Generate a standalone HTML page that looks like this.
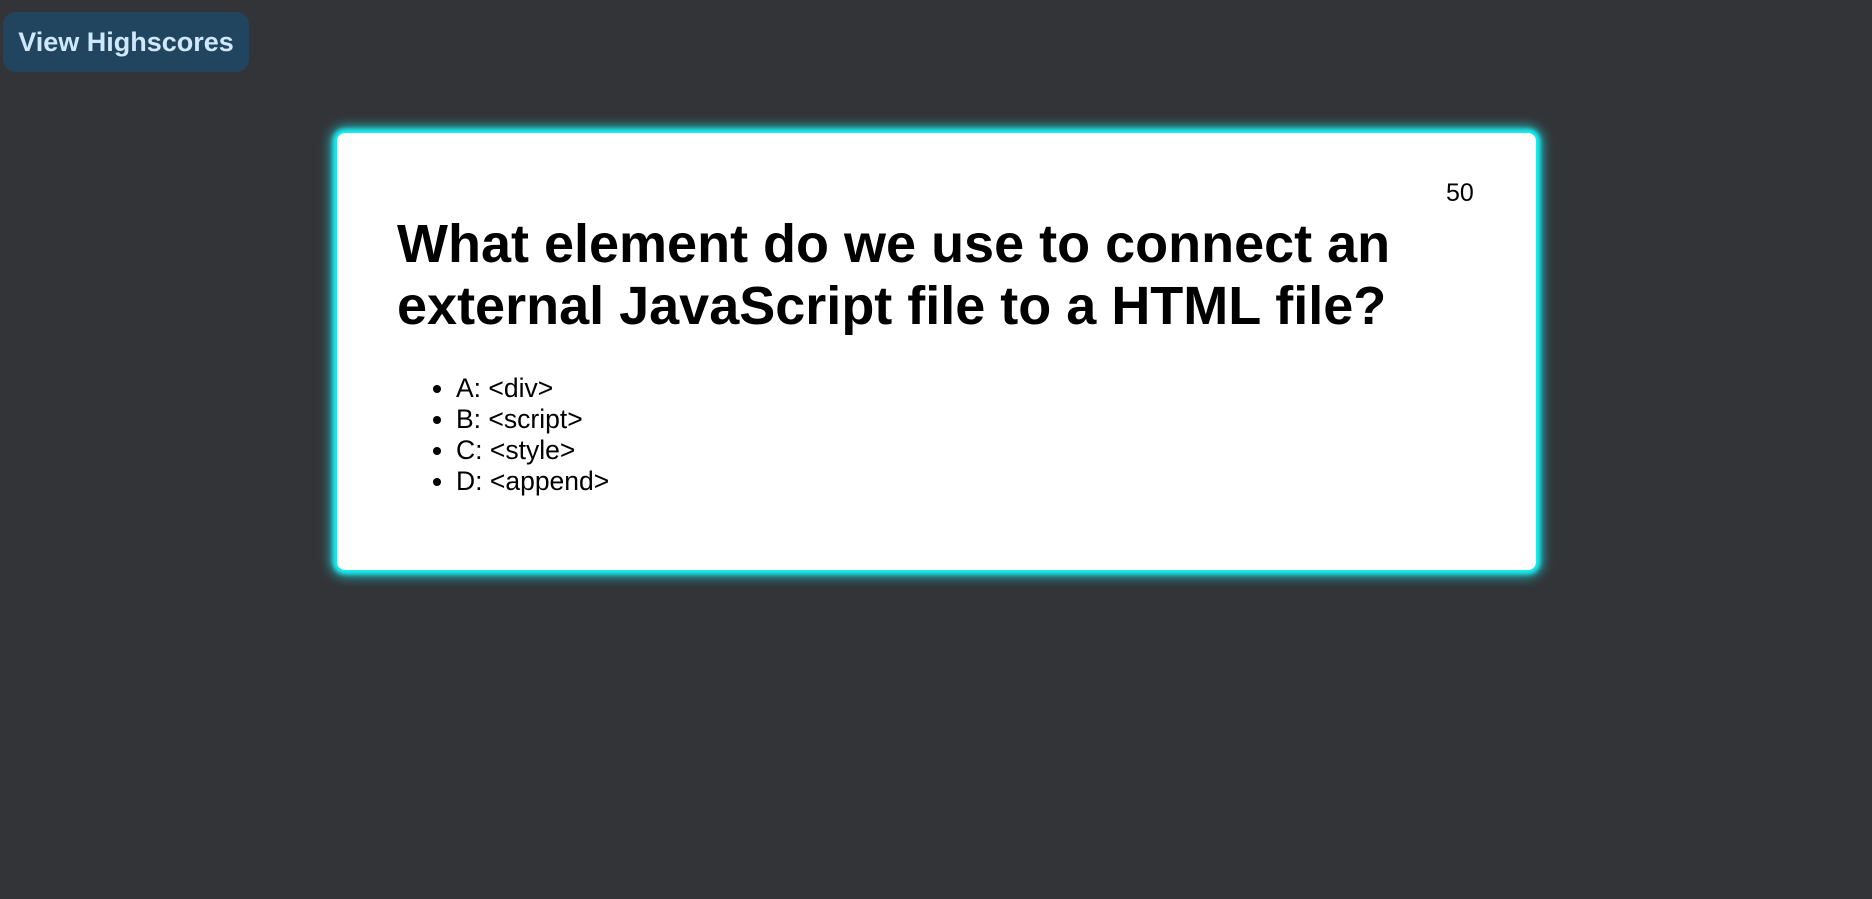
<!DOCTYPE html>
<html><head><style>
html,body{margin:0;padding:0;}
body{background:#333438;width:1872px;height:899px;position:relative;overflow:hidden;font-family:"Liberation Sans",Arial,sans-serif;}
.btn{position:absolute;left:3px;top:12px;width:246px;height:60px;border-radius:13px;background:#22455f;color:#cfe8fb;font-weight:bold;font-size:27px;line-height:60px;text-align:center;}
.card{position:absolute;left:337px;top:133px;width:1199px;height:437px;background:#fff;border-radius:8px;box-shadow:0 0 4px 4px #19eef0,0 0 12px 6px rgba(25,227,232,0.8);}
.score{position:absolute;left:1109px;top:46px;font-size:25px;color:#000;}
h1{position:absolute;left:60px;top:80px;margin:0;font-size:54px;line-height:62px;font-weight:bold;color:#000;width:1050px;}
ul{position:absolute;left:60px;top:240px;margin:0;padding-left:59px;font-size:26.5px;line-height:31px;color:#000;}
</style></head><body>
<div class="btn">View Highscores</div>
<div class="card">
<div class="score">50</div>
<h1>What element do we use to connect an external JavaScript file to a HTML file?</h1>
<ul><li>A: &lt;div&gt;</li><li>B: &lt;script&gt;</li><li>C: &lt;style&gt;</li><li>D: &lt;append&gt;</li></ul>
</div>
</body></html>
